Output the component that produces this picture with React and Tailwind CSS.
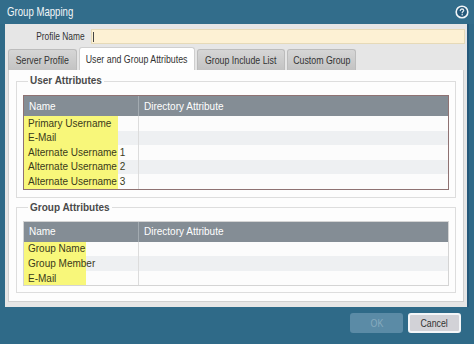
import React from "react";

const sans = { fontFamily: "'Liberation Sans', Arial, sans-serif" };

const USER_ROWS = ["Primary Username", "E-Mail", "Alternate Username 1", "Alternate Username 2", "Alternate Username 3"];
const GROUP_ROWS = ["Group Name", "Group Member", "E-Mail"];

// condensed look: the reference uses a narrow face we don't have
const Narrow = ({ children, origin = "origin-center", scale = "scale-x-[0.8]" }) => (
  <span className={`inline-block whitespace-nowrap ${scale} ${origin}`}>{children}</span>
);

function HelpIcon() {
  return (
    <svg width="14" height="14" viewBox="0 0 14 14">
      <circle cx="7" cy="7" r="5.8" fill="#25597a" stroke="#f2f6f8" strokeWidth="1.6" />
      <path d="M5.3 5.6 C5.3 4.5 6.1 4 7 4 C7.9 4 8.7 4.6 8.7 5.4 C8.7 6.4 7.2 6.5 7.2 7.8" fill="none" stroke="#dfe9ef" strokeWidth="1.3" strokeLinecap="round" />
      <circle cx="7.2" cy="9.8" r="0.8" fill="#dfe9ef" />
    </svg>
  );
}

function Tab({ label, active, w }) {
  return (
    <div
      className={`${w} rounded-t-[3px] border border-b-0 flex items-center justify-center ${
        active ? "h-[23px] bg-white border-[#cfcfcf]" : "h-[21px] bg-gradient-to-b from-[#d6d6d6] to-[#c3c3c3] border-[#bcbcbc]"
      }`}
    >
      <Narrow>{label}</Narrow>
    </div>
  );
}

function AttrTable({ rows, rowH, hiW, borderCls }) {
  return (
    <div className={`border ${borderCls} bg-white`}>
      <div className="flex h-[20px] bg-[#848d95] text-white text-[10px]">
        <div className="w-[115px] flex items-center pl-[5px] border-r border-[#a3abb1]">Name</div>
        <div className="flex-1 flex items-center pl-[5px]">Directory Attribute</div>
      </div>
      {rows.map((r, i) => (
        <div key={r} className={`flex ${rowH} text-[10px] text-[#3a3a1a] ${i % 2 ? "bg-[#eef0f2]" : "bg-[#fcfcfc]"}`}>
          <div className="w-[115px] border-r border-[#dcdcdc] flex">
            <div className={`${hiW} h-full bg-[#f8f77a] flex items-center pl-[4px] whitespace-nowrap`}>{r}</div>
          </div>
          <div className="flex-1" />
        </div>
      ))}
    </div>
  );
}

export default function App() {
  return (
    <div className="w-[474px] h-[344px] bg-[#2f6a88] flex flex-col overflow-hidden" style={sans}>
      {/* TITLE BAR */}
      <div className="h-[24px] flex items-center justify-between pl-[7px] pr-[5px] bg-[#326d8b]">
        <span className="text-[#f2f6f8] text-[13px]">
          <Narrow origin="origin-left" scale="scale-x-[0.74]">Group Mapping</Narrow>
        </span>
        <HelpIcon />
      </div>

      {/* PANEL */}
      <div className="mx-[5px] h-[283px] bg-[#e6e6e6] border-r-2 border-[#25587a] flex flex-col">
        <div className="flex items-center h-[15px] mt-[5px]">
          <div className="w-[80px] text-right text-[11px] text-[#333]">
            <Narrow origin="origin-right" scale="scale-x-[0.76]">Profile Name</Narrow>
          </div>
          <div className="ml-[6px] mr-[2px] flex-1 h-full bg-[#fdf1d4] border border-[#e6dab8] flex items-center pl-[1px]">
            <div className="w-px h-[10px] bg-[#444]" />
          </div>
        </div>

        {/* TABS */}
        <div className="flex items-end gap-[2px] mt-[3px] ml-[3px] h-[23px] text-[11px] text-[#333]">
          <Tab label="Server Profile" w="w-[69px]" />
          <Tab label="User and Group Attributes" w="w-[116px]" active />
          <Tab label="Group Include List" w="w-[88px]" />
          <Tab label="Custom Group" w="w-[69px]" />
        </div>

        {/* CONTENT */}
        <div className="mx-[3px] h-[232px] bg-[#fdfdfd] border border-t-0 border-[#d0d0d0] px-[7px] pt-[5px]">
          <fieldset className="border border-[#dddddd] px-[6px] pb-[7px] pt-[8px]">
            <legend className="ml-[5px] px-[2px] text-[10px] leading-[12px] font-bold text-[#4a4a4a]">User Attributes</legend>
            <AttrTable rows={USER_ROWS} rowH="h-[14.5px]" hiW="w-[94px]" borderCls="border-[#8f7272]" />
          </fieldset>

          <fieldset className="mt-[4px] border border-[#dddddd] px-[6px] pb-[6px] pt-[7px]">
            <legend className="ml-[5px] px-[2px] text-[10px] leading-[12px] font-bold text-[#4a4a4a]">Group Attributes</legend>
            <AttrTable rows={GROUP_ROWS} rowH="h-[14.67px]" hiW="w-[62px]" borderCls="border-[#d4d4d4]" />
          </fieldset>
        </div>
      </div>

      {/* FOOTER BUTTONS */}
      <div className="flex justify-end gap-[5px] pr-[13px] mt-[6px] text-[11px]">
        <div className="w-[53px] h-[20px] rounded-[3px] bg-[#5b8ba6] text-[#86aabe] flex items-center justify-center">
          <Narrow>OK</Narrow>
        </div>
        <div className="w-[53px] h-[20px] rounded-[3px] bg-[#d2d2d7] border-2 border-[#f4f6f8] text-[#333] flex items-center justify-center">
          <Narrow>Cancel</Narrow>
        </div>
      </div>
    </div>
  );
}
